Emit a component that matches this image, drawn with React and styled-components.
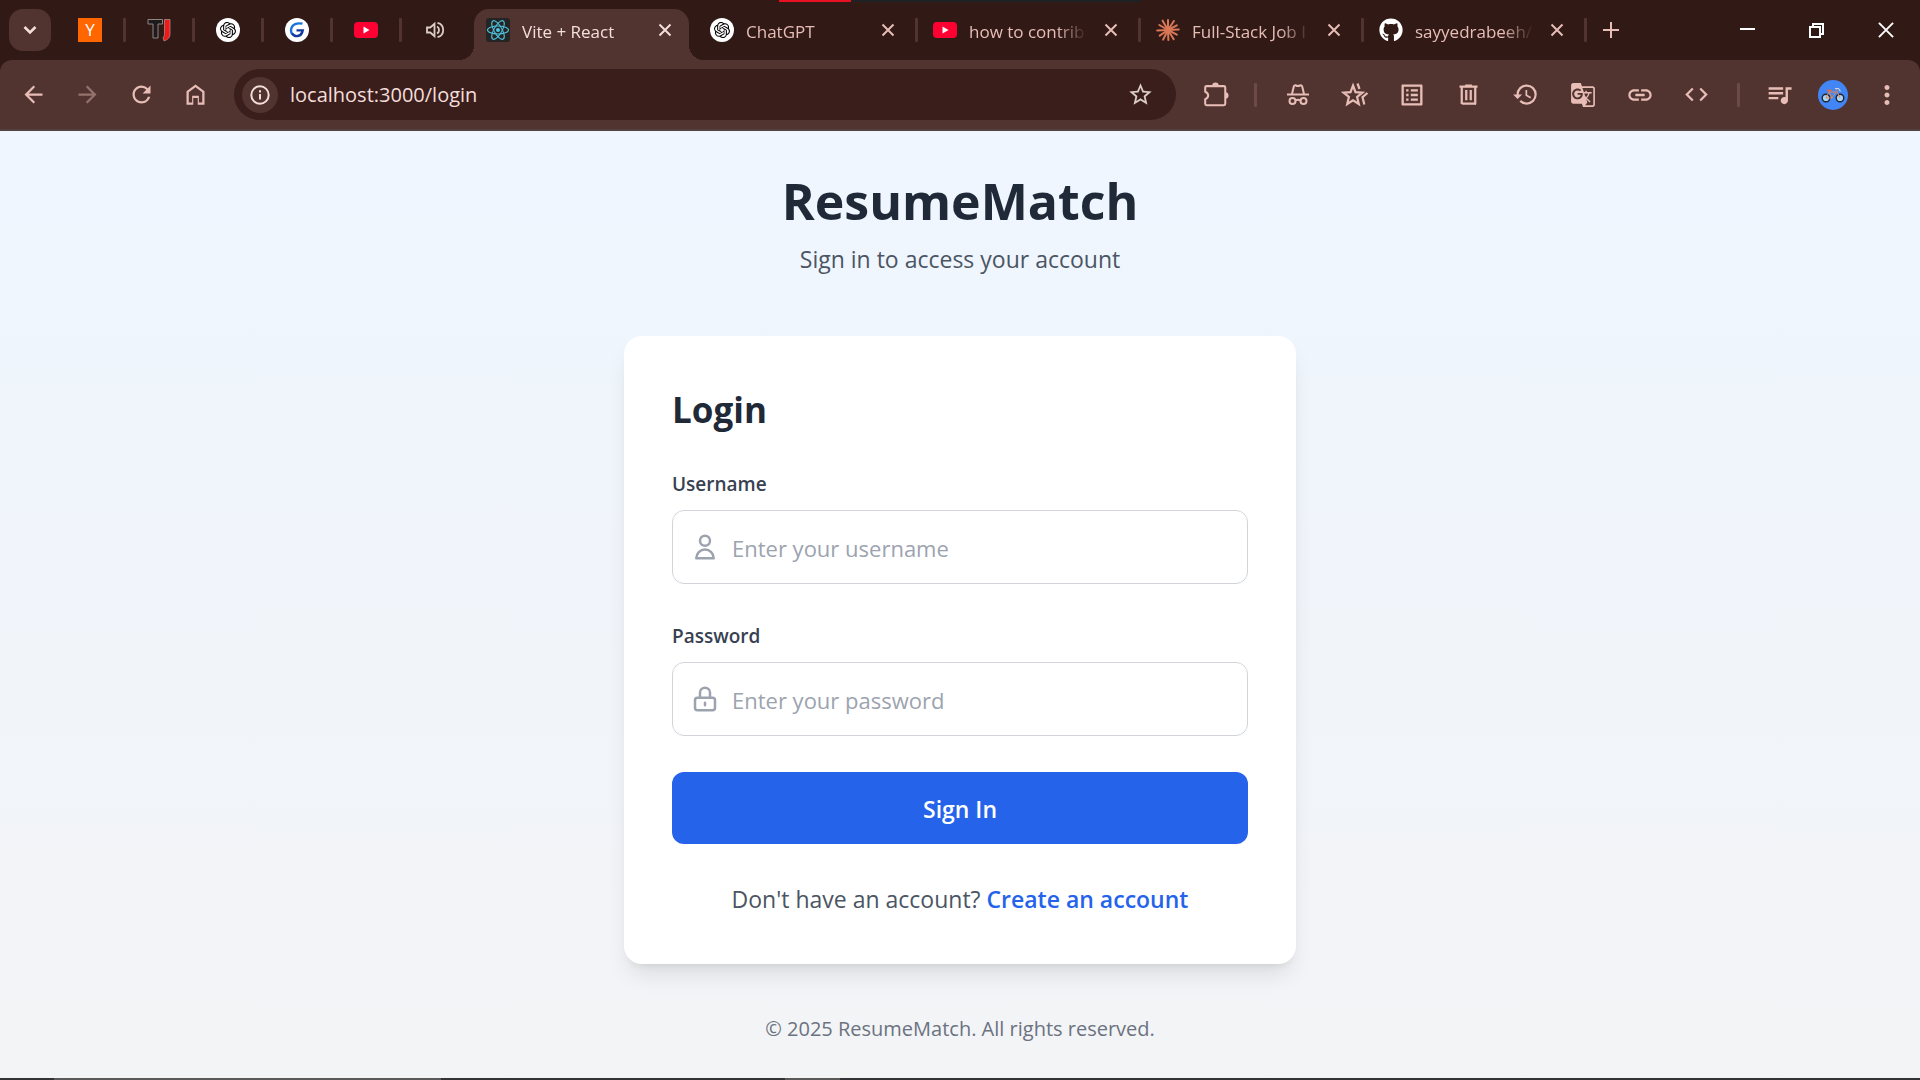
import React from "react";
import styled, { createGlobalStyle, css } from "styled-components";
import {
  MdArrowBack,
  MdArrowForward,
  MdRefresh,
  MdStarBorder,
  MdOutlineListAlt,
  MdHistory,
  MdGTranslate,
  MdLink,
  MdCode,
  MdQueueMusic,
  MdMoreVert,
} from "react-icons/md";
import { FaGithub } from "react-icons/fa";
import { SiOpenai } from "react-icons/si";

const color = {
  frame: "#311a16",
  toolbar: "#513430",
  omnibox: "#3a1e1b",
  icon: "#e7bdb6",
  text: "#f4dedb",
};

const GlobalStyle = createGlobalStyle`
  *, *::before, *::after { box-sizing: border-box; }
  body { margin: 0; font-family: "Segoe UI", "Open Sans", "Noto Sans", sans-serif; }
  button, input { font: inherit; }
  svg { display: block; flex: none; }
`;

const Screen = styled.div`
  display: flex;
  flex-direction: column;
  min-height: 100vh;
`;

/* ---------- browser frame ---------- */

const Frame = styled.header`
  position: relative;
  background: ${color.frame};
`;

const ScreenEdge = styled.div`
  position: absolute;
  top: 0;
  left: 50%;
  display: flex;
  width: 362px;
  height: 2px;
  margin-left: -181px;
  background: #202124;

  &::before {
    content: "";
    width: 72px;
    background: #e81123;
  }
`;

const TabStrip = styled.div`
  display: flex;
  align-items: center;
  height: 60px;
  padding-left: 9px;
`;

const PlainButton = styled.button`
  display: flex;
  align-items: center;
  justify-content: center;
  flex: none;
  padding: 0;
  border: 0;
  background: none;
  color: ${color.icon};
`;

const TabSearch = styled(PlainButton)`
  width: 42px;
  height: 42px;
  margin-right: 6px;
  border-radius: 14px;
  background: ${color.toolbar};
  color: ${color.text};
`;

const divider = css`
  &::after {
    content: "";
    width: 3px;
    height: 24px;
    border-radius: 1px;
    background: ${color.toolbar};
  }
`;

const PinnedTab = styled(PlainButton)`
  width: 69px;
  height: 42px;
  justify-content: flex-end;
  gap: 21px;
  ${divider}

  &:last-of-type {
    padding-right: 26px;
    margin-right: 3px;
  }
  &:last-of-type::after {
    display: none;
  }
`;

const PinnedTabs = styled.nav`
  display: flex;
`;

const Tab = styled.div`
  display: flex;
  align-items: center;
  gap: 12px;
  width: 223px;
  height: 42px;
  padding-left: 15px;
  color: ${color.icon};
  font-size: 17px;
  line-height: 24px;
  ${divider}
`;

const ActiveTab = styled(Tab)`
  position: relative;
  align-self: flex-end;
  width: 215px;
  height: 51px;
  margin-right: 6px;
  padding: 0 12px 9px;
  border-radius: 15px 15px 0 0;
  background: ${color.toolbar};
  color: ${color.text};

  &::before,
  &::after {
    content: "";
    position: absolute;
    bottom: 0;
    width: 15px;
    height: 15px;
    border-radius: 0;
  }
  &::before {
    left: -15px;
    background: radial-gradient(circle at 0 0, ${color.frame} 15px, ${color.toolbar} 15px);
  }
  &::after {
    right: -15px;
    background: radial-gradient(circle at 100% 0, ${color.frame} 15px, ${color.toolbar} 15px);
  }
`;

const TabTitle = styled.span`
  flex: 1;
  min-width: 0;
  padding-top: 3px;
  overflow: hidden;
  white-space: nowrap;
  mask-image: linear-gradient(to left, transparent, #000 30px);
`;

const CloseButton = styled(PlainButton)`
  width: 24px;
  height: 24px;
  margin-right: ${(p) => (p.$active ? 0 : 3)}px;
  color: inherit;
`;

const NewTab = styled(PlainButton)`
  width: 48px;
  height: 42px;
`;

const WindowControls = styled.div`
  display: flex;
  margin-left: auto;
`;

const WindowButton = styled(PlainButton)`
  width: 69px;
  height: 60px;
  color: #fff;
`;

const Toolbar = styled.div`
  display: flex;
  align-items: center;
  height: 71px;
  padding: 0 6px;
  border-bottom: 2px solid #51433f;
  border-radius: 12px 12px 0 0;
  background: ${color.toolbar};
`;

const ToolButton = styled(PlainButton)`
  width: ${(p) => (p.$wide ? 57 : 54)}px;
  height: 51px;
  opacity: ${(p) => (p.disabled ? 0.45 : 1)};
`;

const ToolDivider = styled.span`
  width: 3px;
  height: 24px;
  margin: 0 12px;
  border-radius: 1px;
  background: #6c4a46;
`;

const Omnibox = styled.div`
  display: flex;
  align-items: center;
  flex: 1;
  height: 51px;
  margin: 0 12px;
  padding: 0 9px 0 8px;
  border-radius: 26px;
  background: ${color.omnibox};
`;

const SiteInfo = styled(PlainButton)`
  width: 36px;
  height: 36px;
  border-radius: 50%;
  background: ${color.toolbar};
  color: ${color.text};
`;

const Address = styled.input`
  flex: 1;
  min-width: 0;
  padding: 0 12px;
  border: 0;
  outline: 0;
  background: none;
  color: ${color.text};
  font-size: 20px;
  line-height: 30px;
`;

const Round = styled.span`
  display: flex;
  align-items: center;
  justify-content: center;
  width: 24px;
  height: 24px;
  flex: none;
  border-radius: ${(p) => p.$radius || "50%"};
  background: ${(p) => p.$bg || "#fff"};
  color: ${(p) => p.$fg || "#000"};
  font-size: 17px;
  line-height: 24px;
`;

/* ---------- sign-in page ---------- */

const Page = styled.main`
  display: flex;
  flex: 1;
  flex-direction: column;
  align-items: center;
  padding: 38px 24px 24px;
  background: linear-gradient(to bottom, #eff6ff, #f3f4f6);
`;

const Brand = styled.h1`
  margin: 0 0 8px;
  color: #1f2937;
  font-size: 50px;
  font-weight: 700;
  line-height: 64px;
`;

const Tagline = styled.p`
  margin: 0 0 59px;
  color: #4b5563;
  font-size: 23px;
  line-height: 36px;
`;

const Card = styled.section`
  width: 100%;
  max-width: 672px;
  padding: 48px 48px 46px;
  border-radius: 18px;
  background: #fff;
  box-shadow: 0 15px 23px -5px rgba(0, 0, 0, 0.1), 0 6px 9px -6px rgba(0, 0, 0, 0.1);
`;

const CardTitle = styled.h2`
  margin: 0 0 32px;
  color: #1f2937;
  font-size: 35px;
  font-weight: 700;
  line-height: 52px;
`;

const Form = styled.form`
  display: flex;
  flex-direction: column;
  gap: 36px;
`;

const Field = styled.div`
  display: flex;
  flex-direction: column;
  gap: 9px;
`;

const Label = styled.label`
  color: #374151;
  font-size: 19px;
  font-weight: 600;
  line-height: 33px;
`;

const InputBox = styled.div`
  display: flex;
  align-items: center;
  gap: 12px;
  height: 74px;
  padding: 0 17px;
  border: 1px solid #d1d5db;
  border-radius: 12px;
  color: #9ca3af;
`;

const Input = styled.input`
  flex: 1;
  min-width: 0;
  padding: 2px 0 0;
  border: 0;
  outline: 0;
  background: none;
  color: #1f2937;
  font-size: 22px;
  line-height: 36px;

  &::placeholder {
    color: #9ca3af;
    opacity: 1;
  }
`;

const Submit = styled.button`
  height: 72px;
  padding: 2px 0 0;
  border: 0;
  border-radius: 12px;
  background: #2563eb;
  color: #fff;
  font-size: 23px;
  font-weight: 600;
  line-height: 36px;
`;

const SignUp = styled.p`
  margin: 36px 0 0;
  color: #4b5563;
  font-size: 23px;
  line-height: 38px;
  text-align: center;
`;

const SignUpLink = styled.a`
  color: #2563eb;
  font-weight: 600;
  text-decoration: none;
`;

const Copyright = styled.footer`
  margin-top: 48px;
  color: #6b7280;
  font-size: 20px;
  line-height: 33px;
`;

const Taskbar = styled.div`
  display: flex;
  height: 2px;
  padding-left: 54px;
  background: #333236;
`;

const TaskbarItem = styled.span`
  width: ${(p) => p.$width}px;
  margin-right: 344px;
  background: #5c5a58;
`;

/* ---------- drawings ---------- */

const Cross = ({ size = 14, stroke = 2 }) => (
  <svg width={size} height={size} viewBox="0 0 14 14" fill="none" stroke="currentColor" strokeWidth={stroke}>
    <path d="M1.500 1.500l11 11M12.500 1.500l-11 11" />
  </svg>
);

const YouTubeMark = () => (
  <svg width="24" height="24" viewBox="0 0 24 24">
    <rect y="4" width="24" height="16" rx="4" fill="#ff0033" />
    <path d="M9.500 8.600v6.800l6-3.400z" fill="#fff" />
  </svg>
);

const TjMark = () => (
  <svg width="24" height="24" viewBox="0 0 24 24">
    <path d="M1 1.500h14.500v4.500h-4.500v14h-5v-14h-5z" fill="#1d1b1c" stroke="#8f8583" strokeWidth="1" />
    <path d="M17.500 1.500h5.500v14c0 4-2 6-6 7.500l-1-3.500c1.300-.6 1.500-2 1.500-4z" fill="#f01818" stroke="#a99a97" strokeWidth=".7" />
  </svg>
);

const GMark = () => (
  <svg width="16" height="16" viewBox="0 0 16 16" fill="none" strokeWidth="2.400">
    <path d="M13.500 1.700C8.500.6 2.600 2 2 8.200c0 1.600.5 2.800 1.200 3.800" stroke="#1a73d9" />
    <path d="M3 11.500c2.600 3.800 8.500 3.500 10.300-1.500l.4-1.600H7.500" stroke="#123a9c" />
  </svg>
);

const SpeakerIcon = () => (
  <svg width="20" height="20" viewBox="0 0 20 20" fill="none" stroke="#dccdc9" strokeWidth="1.800">
    <path d="M2 7.500h3.300L9.500 3.800v12.400L5.300 12.500H2z" />
    <path d="M12 6.500a4 4 0 0 1 0 7M12.500 2.800a7.400 7.400 0 0 1 0 14.400" />
  </svg>
);

const ReactMark = () => (
  <svg width="24" height="24" viewBox="0 0 24 24" fill="none" stroke="#4fc3e0" strokeWidth="1.100">
    <circle cx="12" cy="12" r="2" fill="#4fc3e0" stroke="none" />
    <ellipse cx="12" cy="12" rx="10.500" ry="4" />
    <ellipse cx="12" cy="12" rx="10.500" ry="4" transform="rotate(60 12 12)" />
    <ellipse cx="12" cy="12" rx="10.500" ry="4" transform="rotate(120 12 12)" />
  </svg>
);

const rays = [0, 33, 62, 88, 118, 148, 178, 207, 236, 268, 300, 330];

const BurstMark = () => (
  <svg width="24" height="24" viewBox="0 0 24 24" stroke="#d97757" strokeWidth="2" strokeLinecap="round">
    {rays.map((angle, i) => (
      <path key={angle} d={i % 2 ? "M12 12V1.200" : "M12 12V2"} transform={`rotate(${angle} 12 12)`} />
    ))}
  </svg>
);

const HomeIcon = () => (
  <svg width="27" height="27" viewBox="0 0 24 24" fill="currentColor">
    <path d="M6 19h3v-6h6v6h3v-9l-6-4.500L6 10v9Zm-2 2V9l8-6 8 6v12h-6v-6h-4v6H4Z" />
  </svg>
);

const InfoIcon = () => (
  <svg width="20" height="20" viewBox="0 0 20 20" fill="none" stroke="currentColor" strokeWidth="2">
    <circle cx="10" cy="10" r="8.700" />
    <path d="M10 9v5.500M10 5.300v2.100" />
  </svg>
);

const PuzzleIcon = () => (
  <svg width="28" height="28" viewBox="0 0 30 30" fill="none" stroke="currentColor" strokeWidth="2.200" strokeLinejoin="round">
    <path d="M6 5.500h18.500a1.500 1.500 0 0 1 1.500 1.500v17.500a1.500 1.500 0 0 1-1.500 1.500H6a1.500 1.500 0 0 1-1.500-1.500v-5c2-.8 3.200-2 3.200-4s-1.200-3.200-3.200-4V7A1.500 1.500 0 0 1 6 5.500z" />
    <path d="M12 5a3.500 3.500 0 0 1 7 0zM26 12a3.500 3.500 0 0 1 0 7z" fill="currentColor" stroke="none" />
  </svg>
);

const IncognitoIcon = () => (
  <svg width="24" height="24" viewBox="0 0 24 24" fill="none" stroke="currentColor" strokeWidth="2">
    <path d="M1 11.500h22" />
    <path d="M6 11l1.800-7.500c.3-1.300 1.400-1.400 2.200-1 1.300.7 2.700.7 4 0 .8-.4 1.900-.3 2.200 1L18 11" />
    <circle cx="6.500" cy="18" r="3" />
    <circle cx="17.500" cy="18" r="3" />
    <path d="M9.500 17.500c1.500-.9 3.500-.9 5 0" />
  </svg>
);

const StarsIcon = () => (
  <svg width="28" height="28" viewBox="0 0 28 28" fill="none" stroke="currentColor" strokeWidth="2.200">
    <path d="M12 4.500l2.500 6.600 7 .5-5.400 4.400 1.700 7-5.800-3.700-5.800 3.700 1.700-7-5.400-4.400 7-.5z" />
    <path d="M16.500 2.500l2 5.500M26.500 12l-5 4.200 1.800 7.300" />
  </svg>
);

const TrashIcon = () => (
  <svg width="27" height="27" viewBox="0 0 24 24" fill="currentColor">
    <path d="M7 21q-.825 0-1.412-.587Q5 20.825 5 20V6H4V4h5V3h6v1h5v2h-1v14q0 .825-.587 1.413Q17.825 21 17 21ZM17 6H7v13h10ZM9 17h2V8H9Zm4 0h2V8h-2Z" />
  </svg>
);

const BicycleAvatar = () => (
  <svg width="30" height="30" viewBox="0 0 30 30" fill="none">
    <circle cx="15" cy="15" r="15" fill="#4285f4" />
    <circle cx="8" cy="18" r="3.800" fill="#a9d4f5" stroke="#20242c" strokeWidth="1.400" />
    <circle cx="22" cy="18" r="3.800" fill="#a9d4f5" stroke="#20242c" strokeWidth="1.400" />
    <path d="M8 18l3-6h7l-4 6H8M11 12l3 6M22 18l-4-9" stroke="#e08a55" strokeWidth="1" />
    <path d="M9 10.500h4.500" stroke="#f0643c" strokeWidth="1.800" />
    <path d="M17 8.500h3.500l2 3" stroke="#c9d6e2" strokeWidth="1.200" />
  </svg>
);

const UserIcon = () => (
  <svg width="30" height="30" viewBox="0 0 24 24" fill="none" stroke="currentColor" strokeWidth="2" strokeLinecap="round" strokeLinejoin="round">
    <path d="M16 7a4 4 0 11-8 0 4 4 0 018 0zM12 14a7 7 0 00-7 7h14a7 7 0 00-7-7z" />
  </svg>
);

const LockIcon = () => (
  <svg width="30" height="30" viewBox="0 0 24 24" fill="none" stroke="currentColor" strokeWidth="2" strokeLinecap="round" strokeLinejoin="round">
    <path d="M12 15v2m-6 4h12a2 2 0 002-2v-6a2 2 0 00-2-2H6a2 2 0 00-2 2v6a2 2 0 002 2zm10-10V7a4 4 0 00-8 0v4h8z" />
  </svg>
);

const backgroundTabs = [
  { title: "ChatGPT", icon: <Round><SiOpenai size={16} /></Round> },
  { title: "how to contrib", icon: <YouTubeMark /> },
  { title: "Full-Stack Job I", icon: <BurstMark /> },
  { title: "sayyedrabeeh/", icon: <FaGithub size={24} color="#fff" /> },
];

const extensions = [
  { name: "Incognito", icon: <IncognitoIcon /> },
  { name: "Bookmarks", icon: <StarsIcon /> },
  { name: "Reading list", icon: <MdOutlineListAlt size={28} /> },
  { name: "Delete browsing data", icon: <TrashIcon /> },
  { name: "History", icon: <MdHistory size={27} /> },
  { name: "Translate", icon: <MdGTranslate size={26} /> },
  { name: "Copy link", icon: <MdLink size={28} /> },
  { name: "Developer tools", icon: <MdCode size={27} /> },
];

function BrowserFrame() {
  return (
    <Frame>
      <ScreenEdge />
      <TabStrip>
        <TabSearch aria-label="Search tabs">
          <svg width="14" height="10" viewBox="0 0 14 10" fill="none" stroke="currentColor" strokeWidth="2.600">
            <path d="M1.500 2L7 7.500 12.500 2" />
          </svg>
        </TabSearch>
        <PinnedTabs>
          <PinnedTab aria-label="Hacker News"><Round $bg="#ff6600" $fg="#fff" $radius="0">Y</Round></PinnedTab>
          <PinnedTab aria-label="TJ"><TjMark /></PinnedTab>
          <PinnedTab aria-label="ChatGPT"><Round><SiOpenai size={16} /></Round></PinnedTab>
          <PinnedTab aria-label="G"><Round><GMark /></Round></PinnedTab>
          <PinnedTab aria-label="YouTube"><YouTubeMark /></PinnedTab>
          <PinnedTab aria-label="Playing audio"><SpeakerIcon /></PinnedTab>
        </PinnedTabs>
        <ActiveTab>
          <Round $bg="#242424" $radius="3px"><ReactMark /></Round>
          <TabTitle>Vite + React</TabTitle>
          <CloseButton $active aria-label="Close tab"><Cross /></CloseButton>
        </ActiveTab>
        {backgroundTabs.map((tab) => (
          <Tab key={tab.title}>
            {tab.icon}
            <TabTitle>{tab.title}</TabTitle>
            <CloseButton aria-label="Close tab"><Cross /></CloseButton>
          </Tab>
        ))}
        <NewTab aria-label="New tab">
          <svg width="16" height="16" viewBox="0 0 16 16" stroke="currentColor" strokeWidth="2">
            <path d="M8 0v16M0 8h16" />
          </svg>
        </NewTab>
        <WindowControls>
          <WindowButton aria-label="Minimize">
            <svg width="15" height="16" viewBox="0 0 15 16" fill="#fff"><path d="M0 6h15v2H0z" /></svg>
          </WindowButton>
          <WindowButton aria-label="Restore">
            <svg width="15" height="15" viewBox="0 0 15 15" fill="none" stroke="#fff" strokeWidth="2">
              <path d="M1 4h10v10H1zM4 4V1h10v10h-3" />
            </svg>
          </WindowButton>
          <WindowButton aria-label="Close"><Cross size={18} stroke={1.500} /></WindowButton>
        </WindowControls>
      </TabStrip>
      <Toolbar>
        <ToolButton aria-label="Back"><MdArrowBack size={27} /></ToolButton>
        <ToolButton aria-label="Forward" disabled><MdArrowForward size={27} /></ToolButton>
        <ToolButton aria-label="Reload"><MdRefresh size={27} /></ToolButton>
        <ToolButton aria-label="Home"><HomeIcon /></ToolButton>
        <Omnibox>
          <SiteInfo aria-label="Site information"><InfoIcon /></SiteInfo>
          <Address aria-label="Address" defaultValue="localhost:3000/login" />
          <ToolButton aria-label="Bookmark this page"><MdStarBorder size={27} color="#dccdc9" /></ToolButton>
        </Omnibox>
        <ToolButton aria-label="Extensions"><PuzzleIcon /></ToolButton>
        <ToolDivider />
        {extensions.map((item) => (
          <ToolButton key={item.name} $wide aria-label={item.name}>{item.icon}</ToolButton>
        ))}
        <ToolDivider />
        <ToolButton aria-label="Media"><MdQueueMusic size={29} /></ToolButton>
        <ToolButton aria-label="Profile"><BicycleAvatar /></ToolButton>
        <ToolButton aria-label="Menu"><MdMoreVert size={30} /></ToolButton>
      </Toolbar>
    </Frame>
  );
}

export default function App() {
  return (
    <Screen>
      <GlobalStyle />
      <BrowserFrame />
      <Page>
        <Brand>ResumeMatch</Brand>
        <Tagline>Sign in to access your account</Tagline>
        <Card>
          <CardTitle>Login</CardTitle>
          <Form onSubmit={(event) => event.preventDefault()}>
            <Field>
              <Label htmlFor="username">Username</Label>
              <InputBox>
                <UserIcon />
                <Input id="username" type="text" placeholder="Enter your username" />
              </InputBox>
            </Field>
            <Field>
              <Label htmlFor="password">Password</Label>
              <InputBox>
                <LockIcon />
                <Input id="password" type="password" placeholder="Enter your password" />
              </InputBox>
            </Field>
            <Submit type="submit">Sign In</Submit>
          </Form>
          <SignUp>
            Don't have an account? <SignUpLink href="#register">Create an account</SignUpLink>
          </SignUp>
        </Card>
        <Copyright>© 2025 ResumeMatch. All rights reserved.</Copyright>
      </Page>
      <Taskbar>
        <TaskbarItem $width={387} />
        <TaskbarItem $width={55} />
      </Taskbar>
    </Screen>
  );
}
